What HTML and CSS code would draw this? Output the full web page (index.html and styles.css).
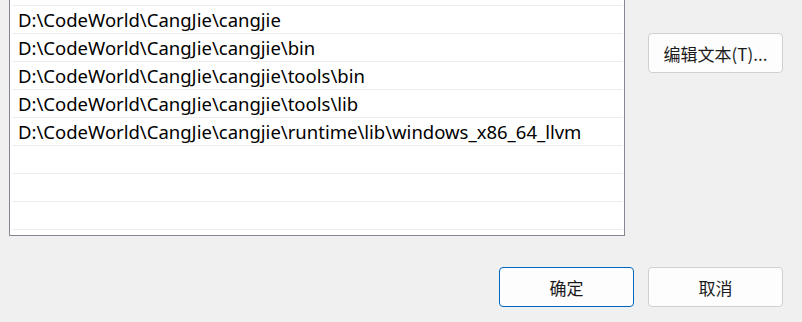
FILE: index.html
```html
<!DOCTYPE html>
<html lang="zh-CN">
<head>
    <meta charset="UTF-8">
    <meta name="viewport" content="width=device-width, initial-scale=1.0">
    <title>编辑环境变量</title>
    <link rel="stylesheet" href="styles.css">
</head>
<body>

    <div class="dialog">
        <div class="main">
            <ul class="path-list">
                <li></li>
                <li>D:\CodeWorld\CangJie\cangjie</li>
                <li>D:\CodeWorld\CangJie\cangjie\bin</li>
                <li>D:\CodeWorld\CangJie\cangjie\tools\bin</li>
                <li>D:\CodeWorld\CangJie\cangjie\tools\lib</li>
                <li>D:\CodeWorld\CangJie\cangjie\runtime\lib\windows_x86_64_llvm</li>
                <li></li>
                <li></li>
                <li></li>
            </ul>
            <div class="side">
                <button class="btn">编辑文本(T)...</button>
            </div>
        </div>

        <div class="footer">
            <button class="btn btn-default">确定</button>
            <button class="btn">取消</button>
        </div>
    </div>

</body>
</html>
```

FILE: styles.css
```css
/* Quita margenes por defecto */
* {
    margin: 0;
    padding: 0;
    box-sizing: border-box;
}

body {
    background-color: #f0f0f0;
    color: #000;
    font-family: "Noto Sans", "Noto Sans CJK SC", sans-serif;
    font-size: 18.5px;
    width: 100vw;
    height: 100vh;
    overflow: hidden;
}

.dialog {
    margin-top: -24px; /* la lista esta desplazada hacia arriba */
}

.main {
    display: flex;
    align-items: flex-start;
}

.path-list {
    list-style: none;
    margin-left: 9px;
    width: 616px;
    height: 260px;
    background-color: #fff;
    border: 1px solid #828790;
    padding: 1px;
}

.path-list li {
    height: 28px;
    line-height: 27px;
    margin-left: 1px;
    padding-left: 6px;
    border-bottom: 1px solid #ececec;
    white-space: nowrap;
}

.side {
    margin-left: 23px;
    padding-top: 57px;
}

.btn {
    font-family: "Noto Sans CJK SC", "Noto Sans", sans-serif;
    font-size: 17px;
    color: #1b1b1b;
    background-color: #fdfdfd;
    border: 1px solid #d0d0d0;
    border-radius: 4px;
    width: 135px;
    height: 40px;
    cursor: pointer;
}

.btn-default {
    border-color: #0067c0;
}

.footer {
    display: flex;
    justify-content: flex-end;
    gap: 14px;
    padding-right: 19px;
    margin-top: 31px;
}
```
